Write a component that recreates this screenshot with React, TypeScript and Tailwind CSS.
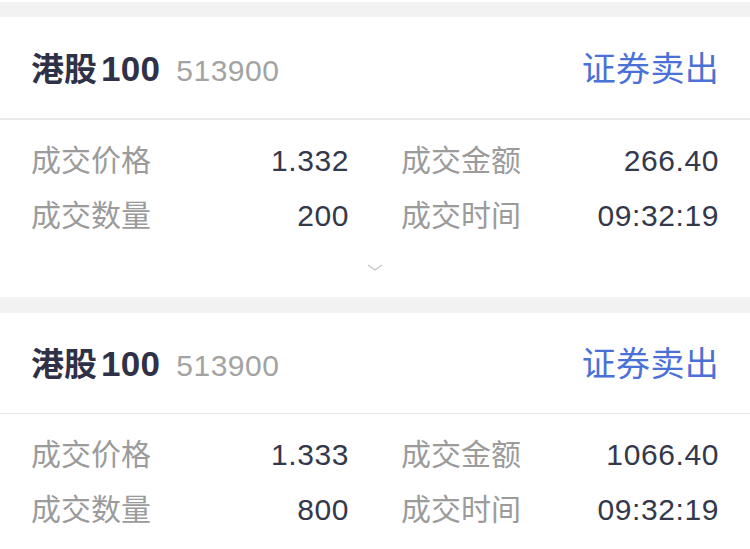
import React from 'react';

interface Trade {
    name: string;
    code: string;
    side: string;
    price: string;
    amount: string;
    qty: string;
    time: string;
}

const TRADES: Trade[] = [
    { name: '港股', code: '513900', side: '证券卖出', price: '1.332', amount: '266.40', qty: '200', time: '09:32:19' },
    { name: '港股', code: '513900', side: '证券卖出', price: '1.333', amount: '1066.40', qty: '800', time: '09:32:19' },
];

const FONT = 'font-["Liberation_Sans","Noto_Sans_CJK_SC",sans-serif]';

function Cell({ label, value }: { label: string; value: string }) {
    return (
        <div className="flex items-center justify-between h-[55px]">
            <span className="text-[30px] text-[#9b9b9b]">{label}</span>
            <span className="text-[30px] text-[#34384b] tracking-[0.6px]">{value}</span>
        </div>
    );
}

function TradeCard({ trade, expandable, thickLine }: { trade: Trade; expandable?: boolean; thickLine?: boolean }) {
    return (
        <div className="bg-white">
            {/* Header */}
            <div
                className={`flex items-center justify-between px-[31px] pt-[3px] border-[#e9e9e9] ${
                    thickLine ? 'h-[103px] border-b-2' : 'h-[101px] border-b'
                }`}
            >
                <div className="flex items-baseline">
                    <span className="text-[33px] font-bold text-[#2f3147]">{trade.name}</span>
                    <span className="text-[35px] font-bold text-[#2f3147] ml-[4px] tracking-[0.3px]">100</span>
                    <span className="text-[30px] text-[#a3a3a3] ml-[16px] tracking-[0.5px]">{trade.code}</span>
                </div>
                <span className="text-[34px] text-[#4b71d7] tracking-[0.3px]">{trade.side}</span>
            </div>

            {/* Details */}
            <div className="grid grid-cols-2 gap-x-[52px] px-[31px] pt-[13px]">
                <Cell label="成交价格" value={trade.price} />
                <Cell label="成交金额" value={trade.amount} />
                <Cell label="成交数量" value={trade.qty} />
                <Cell label="成交时间" value={trade.time} />
            </div>

            {expandable && (
                <div className="flex justify-center h-[54px] pt-[21px]">
                    <svg width="16" height="8" viewBox="0 0 16 8">
                        <path d="M1 1 L8 6 L15 1" fill="none" stroke="#c4c4c4" strokeWidth="1.3" />
                    </svg>
                </div>
            )}
        </div>
    );
}

export default function App() {
    return (
        <div className={`w-[750px] h-[549px] overflow-hidden bg-white ${FONT}`}>
            <div className="h-[2px] bg-white" />
            <div className="h-[15px] bg-[#f2f2f2]" />
            <TradeCard trade={TRADES[0]} expandable thickLine />
            <div className="h-[16px] bg-[#f2f2f2]" />
            <TradeCard trade={TRADES[1]} />
        </div>
    );
}
